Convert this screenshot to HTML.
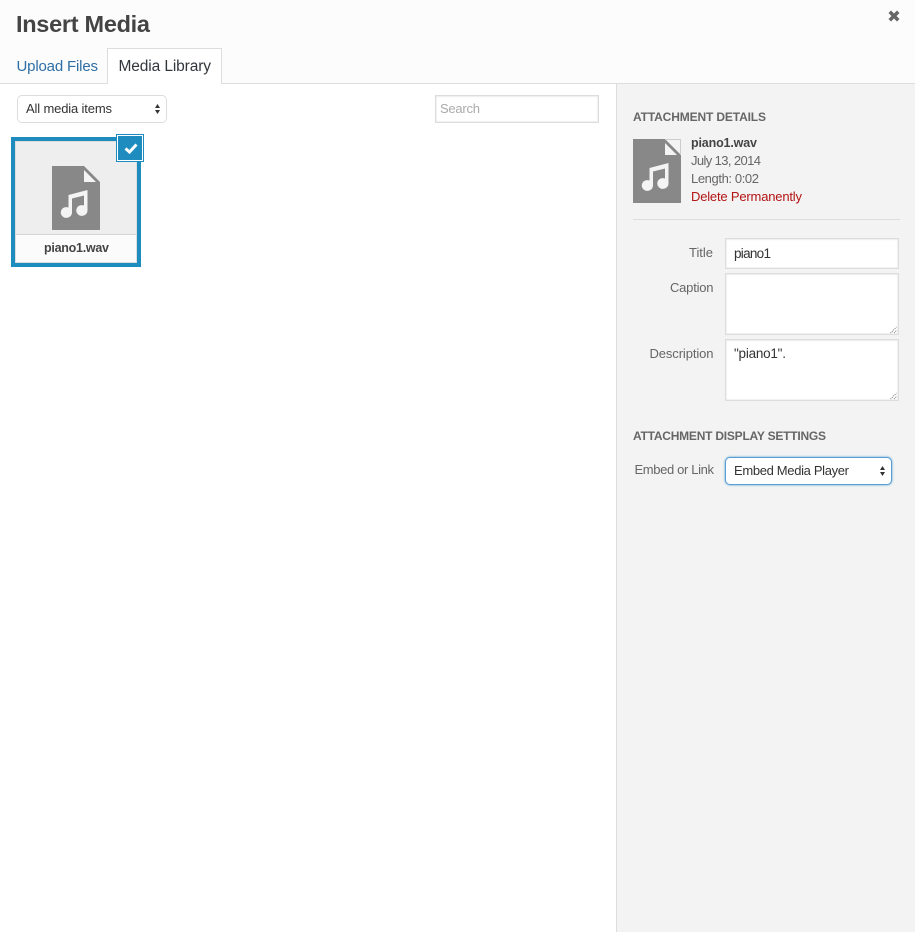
<!DOCTYPE html>
<html lang="en">
<head>
<meta charset="utf-8">
<title>Insert Media</title>
<style>
html,body{margin:0;padding:0;background:#fff}
#p{position:relative;width:915px;height:932px;overflow:hidden;background:#fff;font-family:"Liberation Sans",sans-serif}
#p div{position:absolute;box-sizing:border-box}
.hd{left:0;top:0;width:915px;height:84px;background:#fcfcfc;border-bottom:1px solid #ddd}
.tab{left:107px;top:48px;width:115px;height:36px;background:#fff;border:1px solid #ddd;border-bottom:0}
.side{left:616px;top:84px;width:299px;height:848px;background:#f3f3f3;border-left:1px solid #ddd}
.sel{background:#fff;border:1px solid #ddd;border-radius:5px}
.inp{background:#fff;border:1px solid #ddd;box-shadow:inset 0 0 0 .5px #e6e6e6,inset 0 1px 2px rgba(0,0,0,.04)}
svg{position:absolute;left:0;top:0}
text{font-family:"Liberation Sans",sans-serif}
</style>
</head>
<body>
<div id="p">
<div class="hd"></div>
<div class="tab"></div>
<div class="side"></div>
<div style="left:633px;top:219px;width:267px;height:1px;background:#ddd"></div>

<div class="sel" style="left:17px;top:95px;width:150px;height:28px"></div>
<div class="inp" style="left:435px;top:95px;width:164px;height:28px"></div>

<div style="left:11px;top:137px;width:130px;height:130px;background:#1e8cbe"></div>
<div style="left:15px;top:141px;width:122px;height:122px;background:#eee;border:1px solid #ddd"></div>
<div style="left:16px;top:234px;width:120px;height:28px;background:#fbfbfb;border-top:1px solid #d4d4d4"></div>
<div style="left:116px;top:134px;width:28px;height:28px;background:#1e8cbe;border:1px solid #1e8cbe;box-shadow:inset 0 0 0 1px #fff"></div>

<div class="inp" style="left:725px;top:238px;width:174px;height:31px"></div>
<div class="inp" style="left:725px;top:273px;width:174px;height:62px"></div>
<div class="inp" style="left:725px;top:339px;width:174px;height:62px"></div>
<div class="sel" style="left:725px;top:457px;width:167px;height:28px;border-color:#5b9dd9;box-shadow:0 0 2px rgba(30,140,190,.8)"></div>

<svg width="915" height="932" viewBox="0 0 915 932">
<defs>
<g id="f">
<path fill="#888" d="M0 0H32L48 16V64H0Z"/>
<path fill="#f4f4f4" d="M32 4L44 16H32Z"/>
<path fill="#f4f4f4" d="M16.5 29L35.5 24V44.5a5.6 5.4 0 1 1-3.5-5V29.5L20 32.5V46.5a5.6 5.4 0 1 1-3.5-5Z"/>
</g>
</defs>

<text x="16" y="32" font-size="23.5" font-weight="700" fill="#444" textLength="134" lengthAdjust="spacing">Insert Media</text>
<text x="16.5" y="71" font-size="15" fill="#2f6ea5" textLength="81.5" lengthAdjust="spacing">Upload Files</text>
<text x="118.5" y="71" font-size="15.5" fill="#32373c" textLength="92.5" lengthAdjust="spacing">Media Library</text>
<path d="M888.5 13L891 10.5L894 13.5L897 10.5L899.5 13L896.5 16L899.5 19L897 21.5L894 18.5L891 21.5L888.5 19L891.5 16Z" fill="#666"/>

<text x="26" y="113" font-size="13" fill="#333" textLength="86" lengthAdjust="spacing">All media items</text>
<path d="M157.5 104L160 108H155ZM155 110H160L157.5 114Z" fill="#333"/>
<text x="440" y="113" font-size="13" fill="#aaa" textLength="40" lengthAdjust="spacing">Search</text>

<use href="#f" x="52" y="166"/>
<text x="44" y="252" font-size="12.5" font-weight="700" fill="#444" textLength="65" lengthAdjust="spacing">piano1.wav</text>
<path d="M125.5 148.5L129.5 152L136.5 144.5" fill="none" stroke="#fff" stroke-width="3"/>

<text x="633" y="121" font-size="12" font-weight="700" fill="#666" textLength="133" lengthAdjust="spacing">ATTACHMENT DETAILS</text>
<use href="#f" x="633" y="139"/>
<path d="M665 139.5H680.5V155" fill="none" stroke="#ccc" stroke-width="1"/>
<text x="691" y="147" font-size="12.5" font-weight="700" fill="#444" textLength="66" lengthAdjust="spacing">piano1.wav</text>
<text x="691" y="165" font-size="13" fill="#666" textLength="70" lengthAdjust="spacing">July 13, 2014</text>
<text x="691" y="183" font-size="13" fill="#666" textLength="68" lengthAdjust="spacing">Length: 0:02</text>
<text x="691" y="201" font-size="13" fill="#b31414" textLength="111" lengthAdjust="spacing">Delete Permanently</text>

<text x="689" y="257" font-size="13" fill="#666" textLength="24" lengthAdjust="spacing">Title</text>
<text x="670" y="292" font-size="13" fill="#666" textLength="43.5" lengthAdjust="spacing">Caption</text>
<text x="649.5" y="358" font-size="13" fill="#666" textLength="64" lengthAdjust="spacing">Description</text>
<text x="734" y="258" font-size="13.5" fill="#333" textLength="37" lengthAdjust="spacing">piano1</text>
<text x="734" y="358" font-size="13.5" fill="#333" textLength="52" lengthAdjust="spacing">"piano1".</text>
<path d="M890.5 334L896.5 328M894 334L897 331" stroke="#777" stroke-width="1" stroke-dasharray="1 1" fill="none" transform="translate(0,-1)"/>
<path d="M890.5 400L896.5 394M894 400L897 397" stroke="#777" stroke-width="1" stroke-dasharray="1 1" fill="none" transform="translate(0,-1)"/>

<text x="633" y="440" font-size="12" font-weight="700" fill="#666" textLength="193" lengthAdjust="spacing">ATTACHMENT DISPLAY SETTINGS</text>
<text x="634.5" y="474" font-size="13" fill="#666" textLength="79.5" lengthAdjust="spacing">Embed or Link</text>
<text x="734" y="475" font-size="13" fill="#333" textLength="115" lengthAdjust="spacing">Embed Media Player</text>
<path d="M882.5 466L885 470H880ZM880 472H885L882.5 476Z" fill="#333"/>
</svg>
</div>
</body>
</html>
